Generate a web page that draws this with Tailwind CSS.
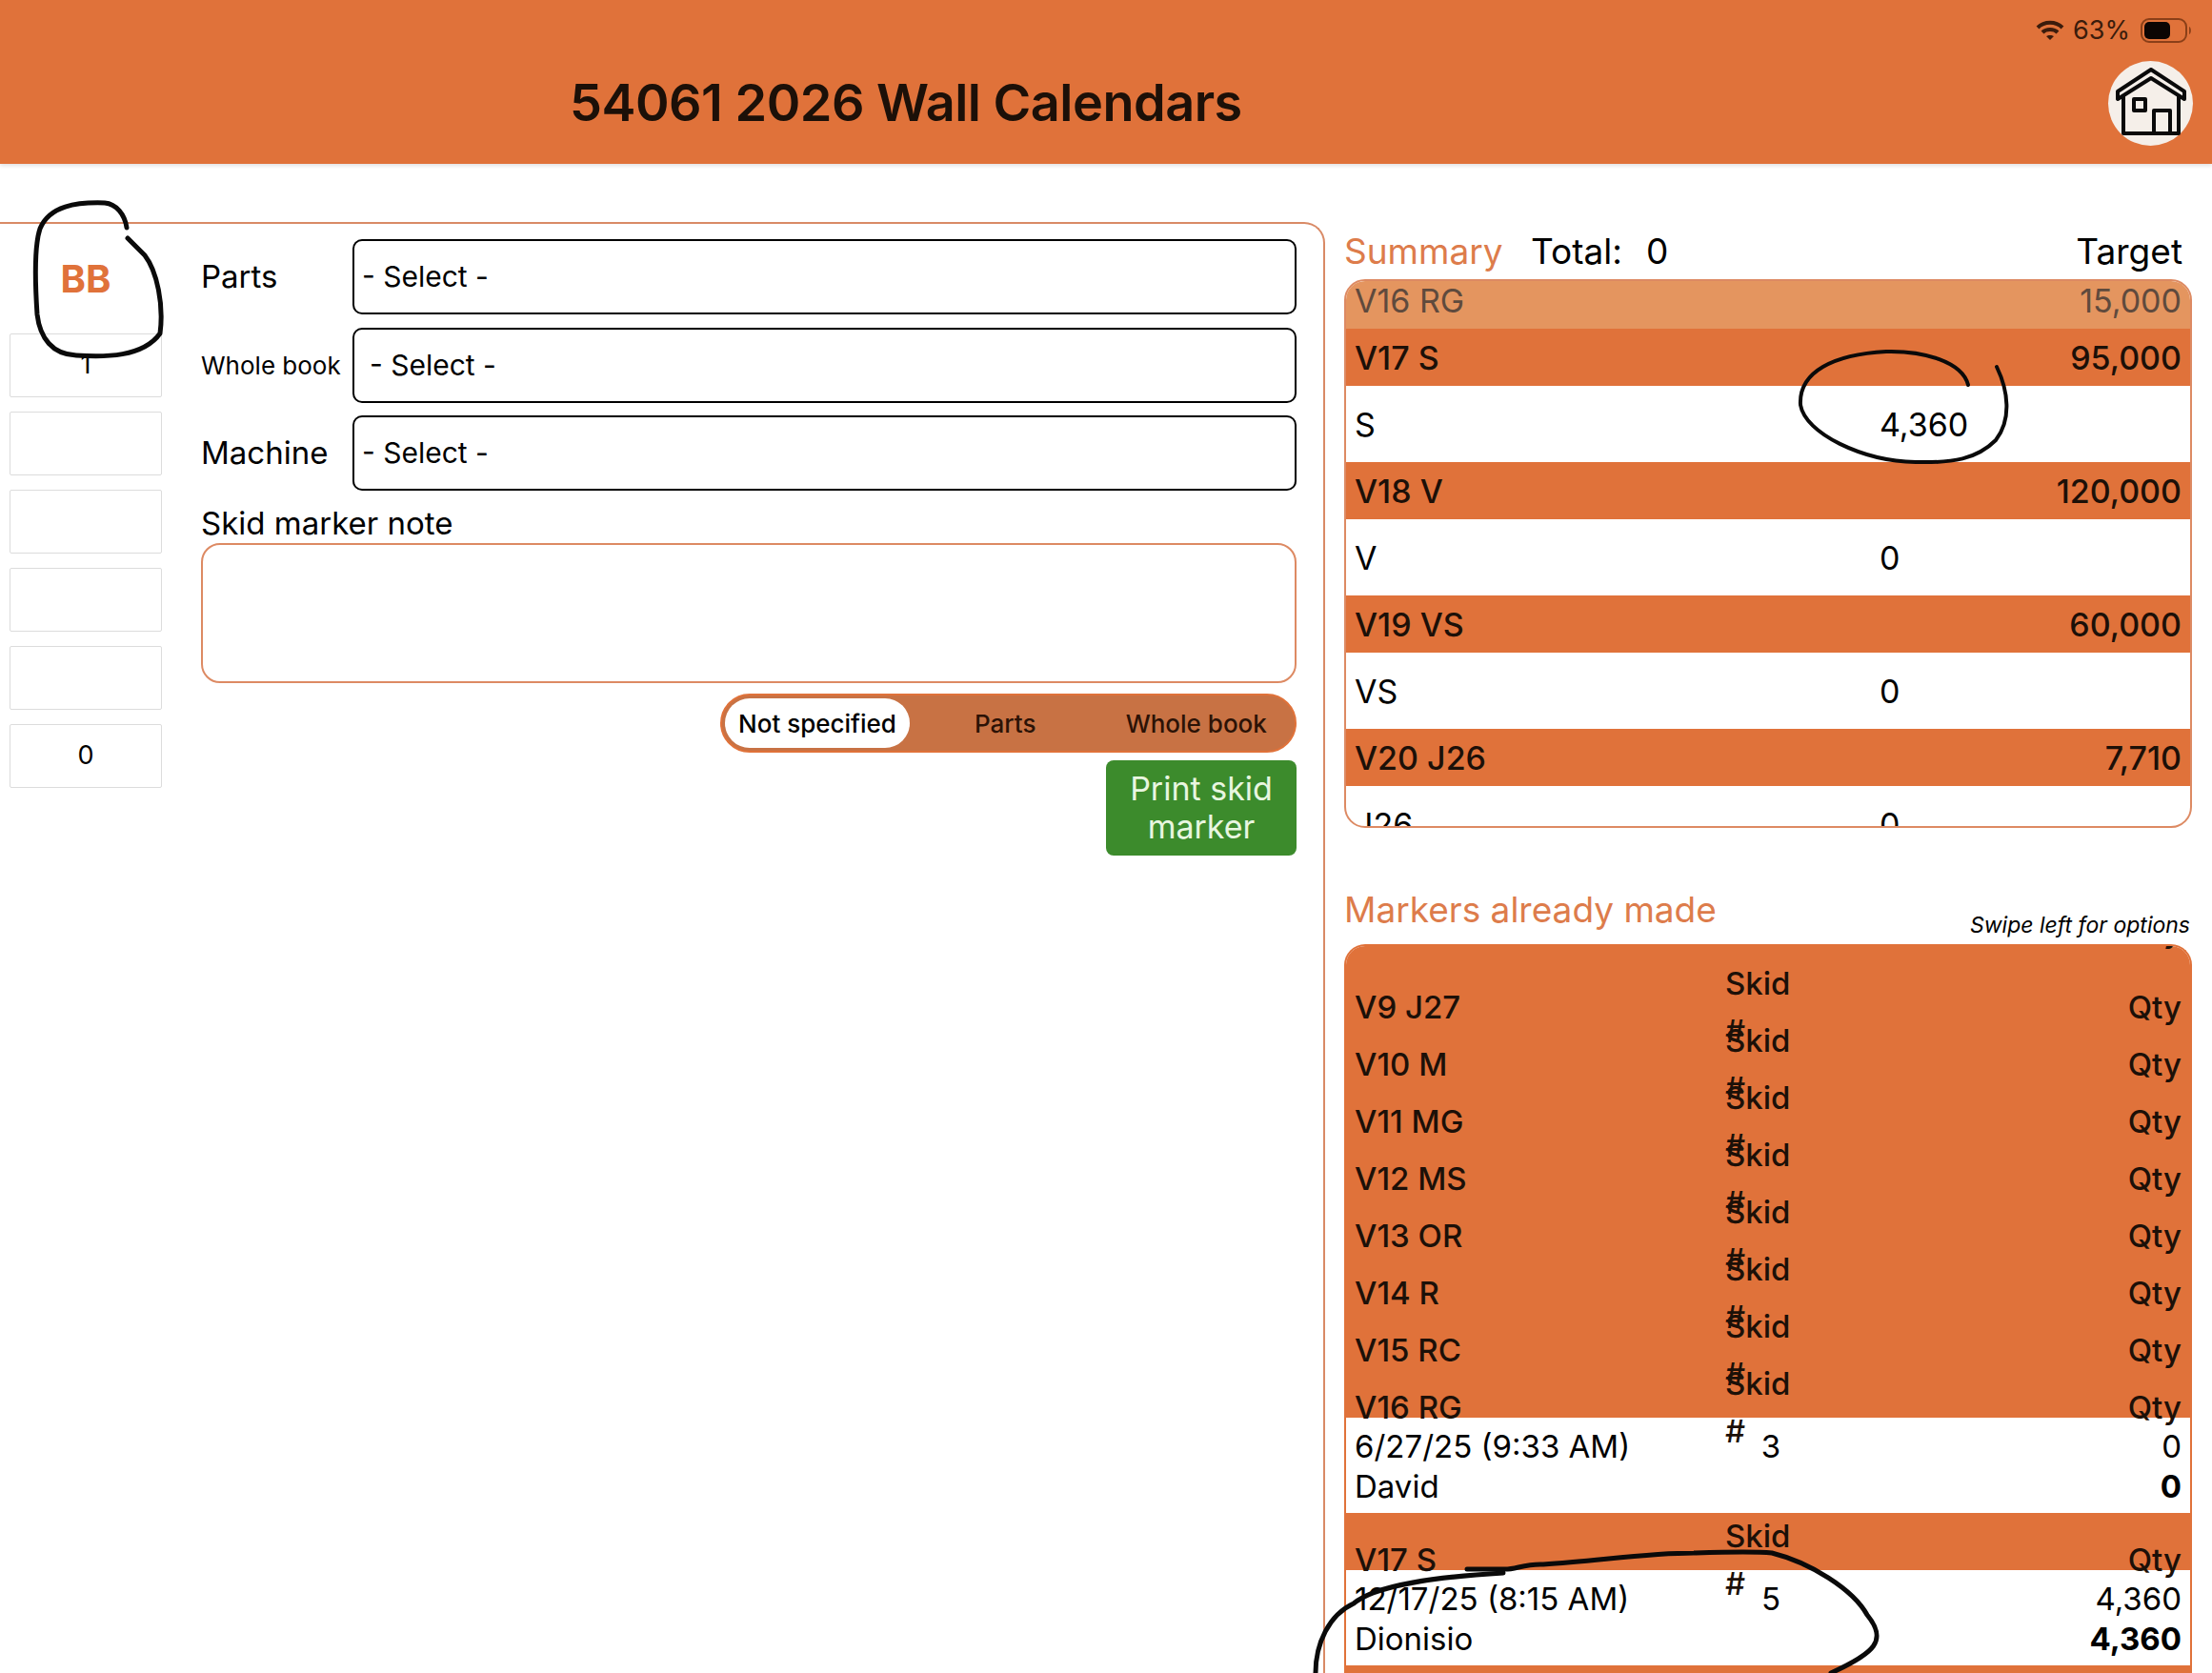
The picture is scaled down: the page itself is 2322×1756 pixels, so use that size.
<!DOCTYPE html>
<html lang="en">
<head>
  <meta charset="UTF-8" />
  <meta name="viewport" content="width=device-width, initial-scale=1.0"/>
  <title>54061 2026 Wall Calendars</title>
  <script src="https://cdn.jsdelivr.net/npm/@tailwindcss/browser@4"></script>
</head>
<body class="relative w-[2322px] h-[1756px] overflow-hidden bg-white text-black font-['Inter','Liberation_Sans',sans-serif]">

  <!-- Header -->
  <header class="flex justify-between h-[172px] bg-[#e0723a] shadow-[0_2px_4px_rgba(0,0,0,0.12)]">
    <h1 class="ml-[598px] mt-[76px] text-[54px] leading-[64px] font-semibold text-[#1c1008] tracking-[-0.5px]">54061 2026 Wall Calendars</h1>
    <div class="flex flex-col items-end pr-[20px]">
      <div class="flex items-center h-[26px] mt-[19px] gap-[9px] text-[#3b1c0c]">
        <svg width="30" height="22" viewBox="0 0 30 22" fill="none" stroke="currentColor" stroke-width="4">
          <path d="M2 8 C9 1 21 1 28 8" />
          <path d="M7 13 C11 9 19 9 23 13" />
          <path d="M15 21 L11 17 C13 15.500 17 15.500 19 17 Z" fill="currentColor" stroke="none" />
        </svg>
        <span class="text-[27px] leading-[26px]">63%</span>
        <svg width="55" height="26" viewBox="0 0 55 26" fill="none" class="ml-[2px]">
          <rect x="1" y="1" width="47" height="24" rx="8" stroke="#8a3f18" stroke-width="2" />
          <rect x="4" y="4" width="27" height="18" rx="5" fill="#0c0503" />
          <path d="M51 9 C53.500 10 53.500 16 51 17 Z" fill="#8a3f18" />
        </svg>
      </div>
      <button class="flex items-center justify-center w-[89px] h-[89px] mt-[19px] rounded-full bg-[#f5efe9]">
        <svg width="76" height="76" viewBox="0 0 76 76" fill="none" stroke="#0a0a0a" stroke-width="4" stroke-linejoin="round">
          <path d="M3 25 L38 2 L73 25 L73 33 L38 11 L3 33 Z" />
          <path d="M9 29 L9 69 L67 69 L67 29" />
          <rect x="20" y="33" width="12" height="12" />
          <path d="M41 69 L41 45 L58 45 L58 69" />
        </svg>
      </button>
    </div>
  </header>

  <main class="flex h-[1584px]">
    <!-- Left panel -->
    <section class="flex w-[1391px] mt-[61px] border-t-2 border-r-2 border-[#d98a66] rounded-tr-[22px]">
      <div class="flex flex-col w-[170px] pl-[10px] shrink-0">
        <div class="flex items-center justify-center h-[115px] text-[40px] font-bold text-[#e0723a]">BB</div>
        <div class="flex flex-col gap-[15px]">
          <div class="flex items-center justify-center h-[67px] border border-[#dcdcdc] rounded-[2px] text-[27px]">1</div>
          <div class="h-[67px] border border-[#dcdcdc] rounded-[2px]"></div>
          <div class="h-[67px] border border-[#dcdcdc] rounded-[2px]"></div>
          <div class="h-[67px] border border-[#dcdcdc] rounded-[2px]"></div>
          <div class="h-[67px] border border-[#dcdcdc] rounded-[2px]"></div>
          <div class="flex items-center justify-center h-[67px] border border-[#dcdcdc] rounded-[2px] text-[27px]">0</div>
        </div>
      </div>

      <div class="flex-1 ml-[41px] mr-[28px] pt-[16px]">
        <div class="flex flex-col gap-[13.500px]">
          <div class="flex items-center">
            <label class="w-[159px] text-[33px]">Parts</label>
            <select class="flex-1 h-[79px] px-[8px] bg-white border-2 border-black rounded-[10px] text-[30px] appearance-none"><option>- Select -</option></select>
          </div>
          <div class="flex items-center">
            <label class="w-[159px] text-[26px]">Whole book</label>
            <select class="flex-1 h-[79px] px-[16px] bg-white border-2 border-black rounded-[10px] text-[30px] appearance-none"><option>- Select -</option></select>
          </div>
          <div class="flex items-center">
            <label class="w-[159px] text-[33px]">Machine</label>
            <select class="flex-1 h-[79px] px-[8px] bg-white border-2 border-black rounded-[10px] text-[30px] appearance-none"><option>- Select -</option></select>
          </div>
        </div>

        <div class="mt-[14px] h-[41px] text-[33px] leading-[41px]">Skid marker note</div>
        <textarea class="block w-full h-[147px] border-2 border-[#dd8a63] rounded-[20px] resize-none"></textarea>

        <div class="flex justify-end mt-[11px]">
          <div class="flex items-center w-[605px] h-[62px] p-[3px] rounded-full bg-[#c87244] border-2 border-[#e0723a] text-[26px]">
            <div class="flex items-center justify-center w-[194px] h-full rounded-full bg-white font-medium">Not specified</div>
            <div class="flex-1 text-center text-[#2c1206] font-medium">Parts</div>
            <div class="flex-1 text-center text-[#2c1206] font-medium">Whole book</div>
          </div>
        </div>

        <div class="flex justify-end mt-[8px]">
          <button class="w-[200px] h-[100px] rounded-[8px] bg-[#3c8b2c] text-[#e8f6e0] text-[34px] leading-[40px]">Print skid<br>marker</button>
        </div>
      </div>
    </section>

    <!-- Right panel -->
    <section class="flex-1 flex flex-col pl-[20px] pr-[21px]">
      <div class="flex items-center mt-[62px] h-[59px] text-[37px]">
        <span class="w-[196px] text-[#dd7c4b]">Summary</span>
        <span class="w-[121px]">Total:</span>
        <span class="flex-1">0</span>
        <span class="pr-[10px]">Target</span>
      </div>

      <div class="h-[576px] border-2 border-[#dd8a63] rounded-[22px] overflow-hidden text-[34px]">
        <div class="flex justify-between items-center h-[50px] pb-[10px] px-[9px] bg-[#e4955f] text-[#5f4a3d]"><span>V16 RG</span><span>15,000</span></div>
        <div class="flex justify-between items-center h-[60px] px-[9px] bg-[#e0723a] text-[#1c1008] font-medium"><span>V17 S</span><span>95,000</span></div>
        <div class="grid grid-cols-[551px_1fr] items-center h-[80px] px-[9px]"><span>S</span><span>4,360</span></div>
        <div class="flex justify-between items-center h-[60px] px-[9px] bg-[#e0723a] text-[#1c1008] font-medium"><span>V18 V</span><span>120,000</span></div>
        <div class="grid grid-cols-[551px_1fr] items-center h-[80px] px-[9px]"><span>V</span><span>0</span></div>
        <div class="flex justify-between items-center h-[60px] px-[9px] bg-[#e0723a] text-[#1c1008] font-medium"><span>V19 VS</span><span>60,000</span></div>
        <div class="grid grid-cols-[551px_1fr] items-center h-[80px] px-[9px]"><span>VS</span><span>0</span></div>
        <div class="flex justify-between items-center h-[60px] px-[9px] bg-[#e0723a] text-[#1c1008] font-medium"><span>V20 J26</span><span>7,710</span></div>
        <div class="grid grid-cols-[551px_1fr] items-center h-[80px] px-[9px]"><span>J26</span><span>0</span></div>
      </div>

      <div class="flex justify-between items-end h-[122px] pb-[5px]">
        <span class="text-[37px] leading-[46px] mb-[8px] text-[#dd7c4b]">Markers already made</span>
        <span class="text-[23px] leading-[30px] italic pr-[2px]">Swipe left for options</span>
      </div>

      <div class="flex-1 border-x-2 border-t-2 border-[#e0723a] rounded-t-[22px] overflow-hidden text-[33px]">
        <div class="h-[15px] overflow-hidden bg-[#e0723a]">
          <div class="flex justify-end items-center h-[60px] -mt-[45px] px-[9px] text-[#1c1008] font-medium">Qty</div>
        </div>
        <div class="grid grid-cols-[389px_96px_1fr] items-center h-[60px] px-[9px] bg-[#e0723a] text-[#1c1008] font-medium"><span>V9 J27</span><span>Skid #</span><span class="text-right">Qty</span></div>
        <div class="grid grid-cols-[389px_96px_1fr] items-center h-[60px] px-[9px] bg-[#e0723a] text-[#1c1008] font-medium"><span>V10 M</span><span>Skid #</span><span class="text-right">Qty</span></div>
        <div class="grid grid-cols-[389px_96px_1fr] items-center h-[60px] px-[9px] bg-[#e0723a] text-[#1c1008] font-medium"><span>V11 MG</span><span>Skid #</span><span class="text-right">Qty</span></div>
        <div class="grid grid-cols-[389px_96px_1fr] items-center h-[60px] px-[9px] bg-[#e0723a] text-[#1c1008] font-medium"><span>V12 MS</span><span>Skid #</span><span class="text-right">Qty</span></div>
        <div class="grid grid-cols-[389px_96px_1fr] items-center h-[60px] px-[9px] bg-[#e0723a] text-[#1c1008] font-medium"><span>V13 OR</span><span>Skid #</span><span class="text-right">Qty</span></div>
        <div class="grid grid-cols-[389px_96px_1fr] items-center h-[60px] px-[9px] bg-[#e0723a] text-[#1c1008] font-medium"><span>V14 R</span><span>Skid #</span><span class="text-right">Qty</span></div>
        <div class="grid grid-cols-[389px_96px_1fr] items-center h-[60px] px-[9px] bg-[#e0723a] text-[#1c1008] font-medium"><span>V15 RC</span><span>Skid #</span><span class="text-right">Qty</span></div>
        <div class="grid grid-cols-[389px_96px_1fr] items-center h-[60px] px-[9px] bg-[#e0723a] text-[#1c1008] font-medium"><span>V16 RG</span><span>Skid #</span><span class="text-right">Qty</span></div>
        <div class="grid grid-cols-[389px_96px_1fr] h-[100px] pt-[9px] px-[9px] leading-[42px]">
          <div>6/27/25 (9:33 AM)<br>David</div>
          <div class="text-center">3</div>
          <div class="text-right">0<br><b>0</b></div>
        </div>
        <div class="grid grid-cols-[389px_96px_1fr] items-center h-[60px] px-[9px] bg-[#e0723a] text-[#1c1008] font-medium"><span>V17 S</span><span>Skid #</span><span class="text-right">Qty</span></div>
        <div class="grid grid-cols-[389px_96px_1fr] h-[100px] pt-[9px] px-[9px] leading-[42px]">
          <div>12/17/25 (8:15 AM)<br>Dionisio</div>
          <div class="text-center">5</div>
          <div class="text-right">4,360<br><b>4,360</b></div>
        </div>
        <div class="h-[60px] bg-[#e0723a]"></div>
      </div>
    </section>
  </main>

  <!-- Hand-drawn ink on top of the page -->
  <svg class="absolute inset-0 pointer-events-none" width="2322" height="1756" viewBox="0 0 2322 1756" fill="none" stroke="#0a0a0a" stroke-width="5" stroke-linecap="round" stroke-linejoin="round">
    <path d="M133 239 C131 225 122 214 110 213 C80 212 52 216 42 240 C36 258 37 300 39 330 C42 355 55 372 80 373 C110 375 150 375 168 350 C172 320 165 285 152 268 L134 250" />
    <path d="M2066 404 C2060 380 2020 368 1980 369 C1925 372 1888 390 1890 425 C1895 455 1955 484 2011 485 C2050 486 2075 482 2095 462 C2112 440 2108 410 2096 385" stroke-width="4" />
    <path d="M1381 1756 C1381 1725 1395 1695 1421 1683 C1445 1663 1510 1655 1578 1651" />
    <path d="M1540 1647 L1578 1647 C1590 1648 1600 1641 1620 1642 C1680 1638 1730 1630 1778 1630 C1810 1629 1840 1628 1860 1630 C1900 1640 1945 1668 1960 1695 C1982 1722 1968 1735 1922 1756" />
  </svg>
</body>
</html>
